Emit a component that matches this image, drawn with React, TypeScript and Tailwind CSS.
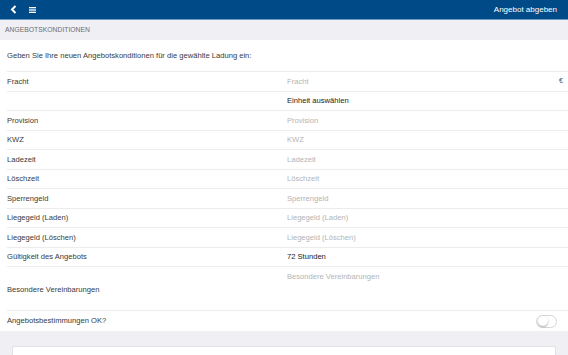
import React, { useState } from "react";

type Row = { label: string; value: string; filled?: boolean; suffix?: string };

const rows: Row[] = [
  { label: "Fracht", value: "Fracht", suffix: "€" },
  { label: "", value: "Einheit auswählen", filled: true },
  { label: "Provision", value: "Provision" },
  { label: "KWZ", value: "KWZ" },
  { label: "Ladezeit", value: "Ladezeit" },
  { label: "Löschzeit", value: "Löschzeit" },
  { label: "Sperrengeld", value: "Sperrengeld" },
  { label: "Liegegeld (Laden)", value: "Liegegeld (Laden)" },
  { label: "Liegegeld (Löschen)", value: "Liegegeld (Löschen)" },
  { label: "Gültigkeit des Angebots", value: "72 Stunden", filled: true },
];

const App: React.FC = () => {
  const [accepted, setAccepted] = useState(false);

  return (
    <div className="w-[568px] h-[355px] overflow-hidden bg-white font-['Liberation_Sans',Arial,sans-serif] text-[#3a3a3a]">
      {/* Header */}
      <header className="h-[20px] bg-[#004b87] border-b border-[#6b9cc4] flex items-center px-[10px] text-white">
        <button aria-label="Zurück" className="w-[8px] h-[10px] flex items-center">
          <svg width="7" height="9" viewBox="0 0 7 9">
            <path d="M5.5 1 L2 4.5 L5.5 8" fill="none" stroke="white" strokeWidth="2" />
          </svg>
        </button>
        <button aria-label="Menü" className="ml-[11px] w-[8px] h-[8px] flex items-center">
          <svg width="7" height="6" viewBox="0 0 7 6">
            <rect x="0" y="0" width="7" height="1.3" fill="white" />
            <rect x="0" y="2.35" width="7" height="1.3" fill="white" />
            <rect x="0" y="4.7" width="7" height="1.3" fill="white" />
          </svg>
        </button>
        <span className="ml-auto mr-[1px] text-[8px]">Angebot abgeben</span>
      </header>

      {/* Section title */}
      <div className="h-[20px] bg-[#efeff4] flex items-center px-[5px] text-[6.8px] text-[#6d6d72] uppercase">
        Angebotskonditionen
      </div>

      <div className="bg-white">
        <p className="h-[31px] flex items-center px-[7px] text-[7.6px]">
          Geben Sie Ihre neuen Angebotskonditionen für die gewählte Ladung ein:
        </p>

        <div className="ml-[7px] border-t border-[#ececec]">
          {rows.map((r, i) => (
            <div key={i} className="h-[19.5px] flex items-center border-b border-[#ececec] text-[7.6px]">
              <span className="w-[280px] shrink-0">{r.label}</span>
              <span className={`flex-1 ${r.filled ? "text-[#222]" : "text-[#b4b4b4]"}`}>{r.value}</span>
              {r.suffix && <span className="w-[9px] text-[#555] text-[7px]">{r.suffix}</span>}
            </div>
          ))}

          <div className="h-[44px] flex border-b border-[#ececec] text-[7.6px]">
            <span className="w-[280px] shrink-0 self-center pt-[2px]">Besondere Vereinbarungen</span>
            <span className="flex-1 pt-[4px] text-[#b4b4b4]">Besondere Vereinbarungen</span>
          </div>

          <div className="h-[20px] flex items-center text-[7.6px] pr-[11px]">
            <span className="flex-1">Angebotsbestimmungen OK?</span>
            <button
              aria-label="Angebotsbestimmungen OK?"
              onClick={() => setAccepted(!accepted)}
              className={`w-[21px] h-[13px] rounded-full border flex items-center p-[1px] ${
                accepted ? "bg-[#4cd964] border-[#4cd964] justify-end" : "bg-white border-[#d6d6d6]"
              }`}
            >
              <span className="w-[10px] h-[10px] rounded-full bg-white shadow-[0_1px_2px_rgba(0,0,0,0.35)]" />
            </button>
          </div>
        </div>
      </div>

      {/* Footer */}
      <div className="bg-[#efeff4] h-[30px] pt-[15px] px-[12px]">
        <div className="h-[24px] bg-white border border-[#e2e2e2] rounded-[2px] flex justify-center pt-[6px] text-[8px] text-[#4caf50]">
          Speichern
        </div>
      </div>
    </div>
  );
};

export default App;
